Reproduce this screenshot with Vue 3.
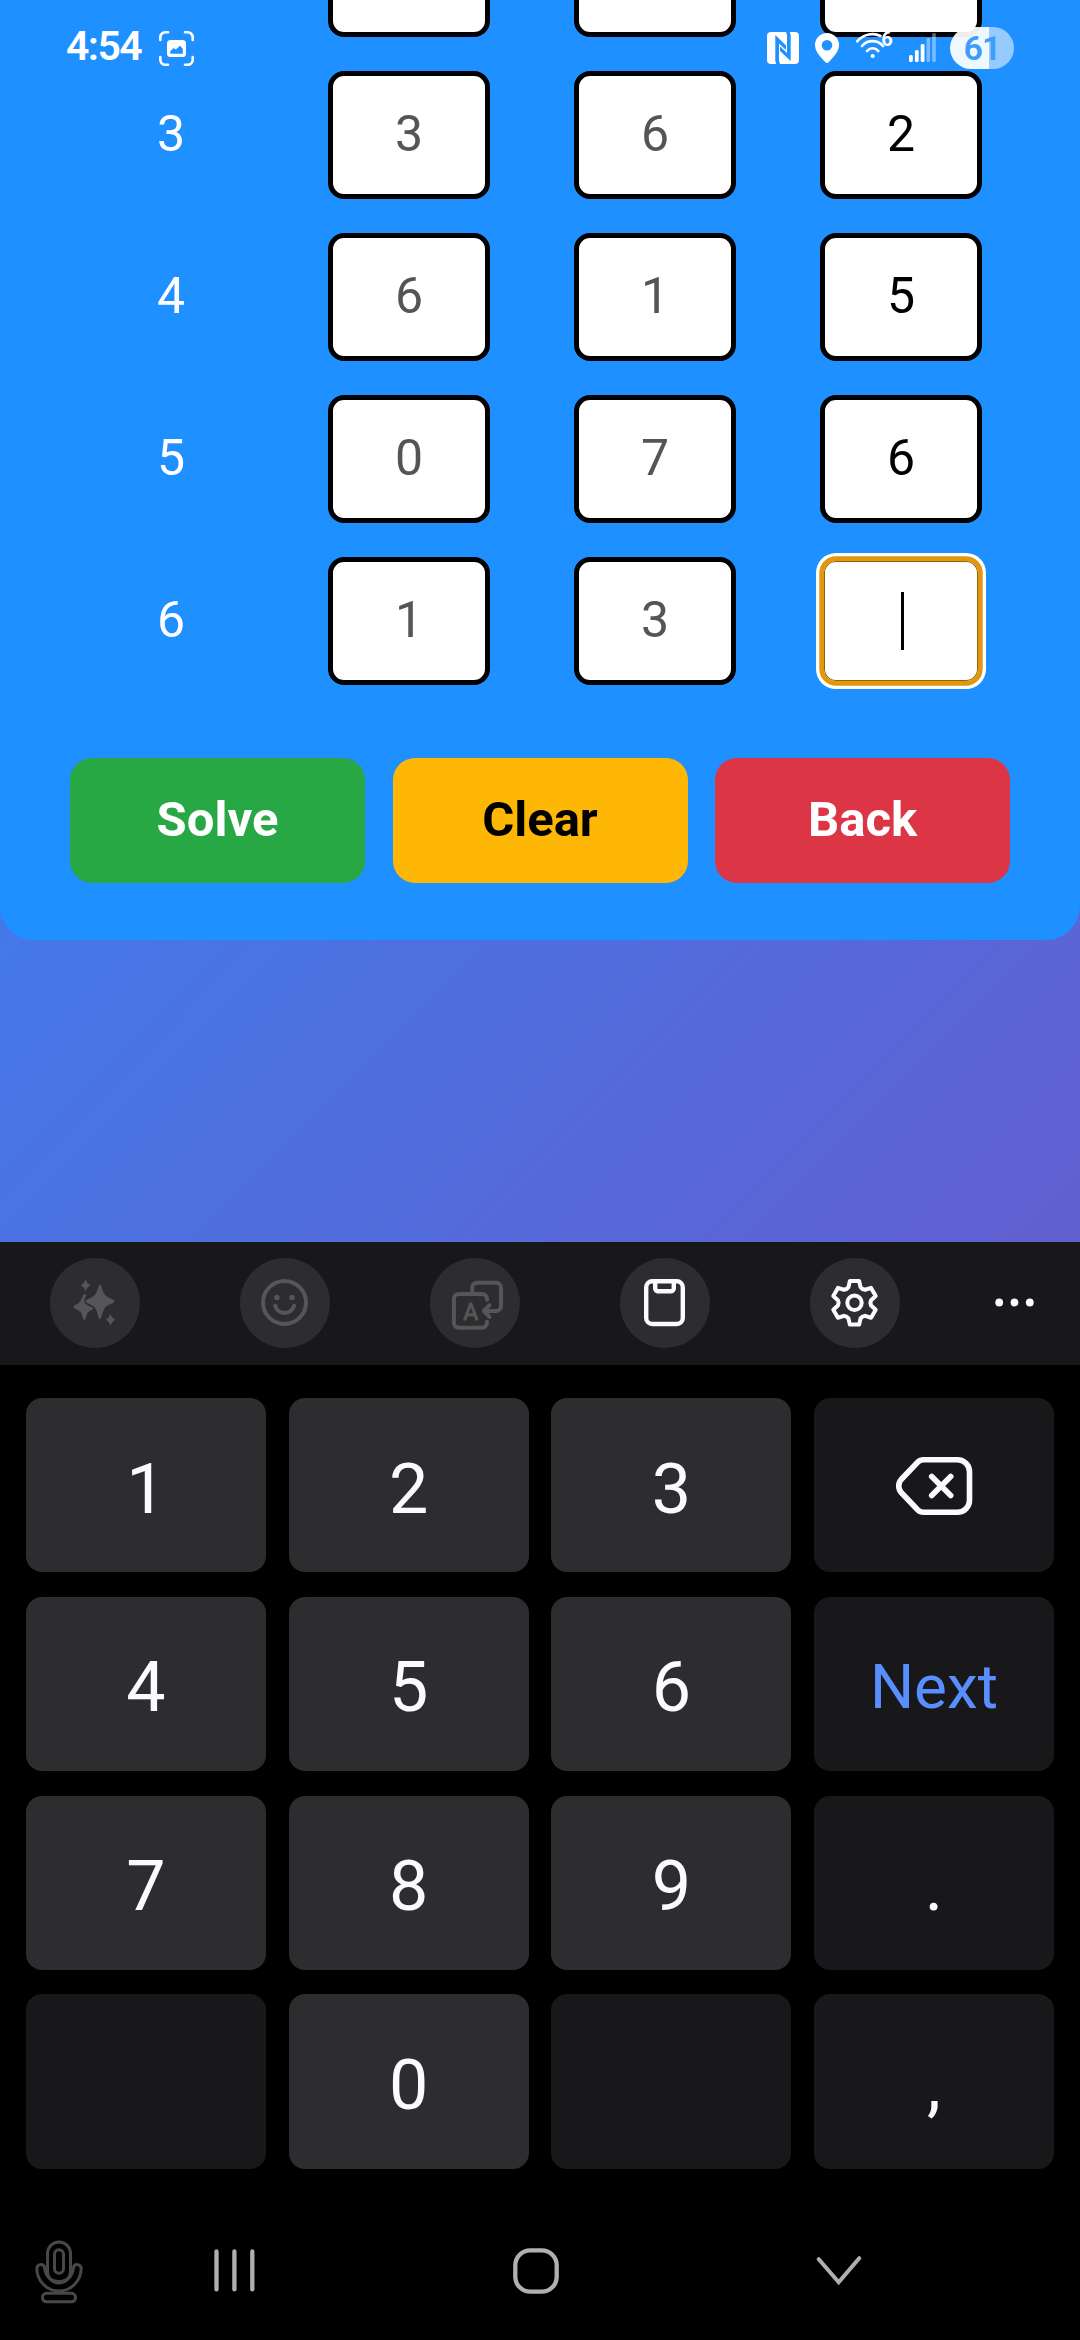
<script setup>
const rows = [
  { n: '3', a: '3', b: '6', c: '2' },
  { n: '4', a: '6', b: '1', c: '5' },
  { n: '5', a: '0', b: '7', c: '6' },
  { n: '6', a: '1', b: '3', c: null },
]

const keys = [
  { t: '1' }, { t: '2' }, { t: '3' }, { icon: 'backspace', dark: true },
  { t: '4' }, { t: '5' }, { t: '6' }, { t: 'Next', dark: true, action: true },
  { t: '7' }, { t: '8' }, { t: '9' }, { t: '.', dark: true },
  { t: '', dark: true }, { t: '0' }, { t: '', dark: true }, { t: ',', dark: true },
]

// Six-toothed gear outline, drawn around the centre of its button.
const profile = [[-12, 22.3], [12, 22.3], [21, 16.8], [30, 15.9], [39, 16.8]]
const gear = 'M' + Array.from({ length: 6 }, (_, k) => profile.map(([deg, r]) => {
  const a = ((k * 60 + deg) * Math.PI) / 180
  return `${(44.5 + r * Math.sin(a)).toFixed(2)} ${(44.8 - r * Math.cos(a)).toFixed(2)}`
}).join('L')).join('L') + 'Z'
</script>

<template>
  <div class="screen">
    <header class="status">
      <span class="time">4:54</span>
      <svg class="shot" width="35" height="35" viewBox="0 0 35 35" fill="none">
        <path d="M1.3 9V6.3a5 5 0 0 1 5-5H9M26 1.3h2.7a5 5 0 0 1 5 5V9M33.7 26v2.7a5 5 0 0 1-5 5H26M9 33.7H6.3a5 5 0 0 1-5-5V26" stroke="#fff" stroke-width="2.6" stroke-linecap="round" />
        <rect x="8" y="9" width="19" height="17" rx="3.5" fill="#fff" />
        <path d="M11.3 22.8v-2.6l3.3-3.2 2.2 1.6 4.2-3.8 2.8 3v5z" fill="#1e90ff" />
      </svg>
      <span class="spacer"></span>
      <svg class="nfc" width="32" height="32" viewBox="0 0 32 32">
        <rect width="32" height="32" rx="4" fill="#fff" />
        <path d="M9.3 32L8.3 29V3L19 13.5V18L12 11.5V29l1 3zM22.7 0l1 3v26L13 19v-4.500L20 21V3l-1-3z" fill="#1e90ff" />
      </svg>
      <svg class="pin" width="24" height="30" viewBox="0 0 24 30">
        <path fill-rule="evenodd" d="M12 0a12 12 0 0 0-12 12c0 7 6 12.500 10.500 17.300a2.100 2.100 0 0 0 3 0C18 24.500 24 19 24 12A12 12 0 0 0 12 0zm0 7a5.300 5.300 0 1 1 0 10.600A5.300 5.300 0 0 1 12 7z" fill="#fff" />
      </svg>
      <svg class="wifi" width="42" height="50" viewBox="0 -10 42 50" fill="none">
        <g stroke="#fff" stroke-width="2.600" stroke-linecap="round">
          <path d="M2.200 8.300C9 .5 19 -.3 25.500 3" />
          <path d="M7 13C12.500 6.500 22.500 6.500 28 13" />
          <path d="M12 18c3.500-3.600 8-3.600 11.300 0" />
        </g>
        <circle cx="17.700" cy="23" r="2.100" fill="#fff" />
        <text x="26.300" y="13.300" font-size="20" font-weight="700" fill="#fff">6</text>
      </svg>
      <svg class="signal" width="27" height="30" viewBox="0 0 27 30" fill="#fff">
        <rect x="0" y="22" width="3.800" height="7" rx="1.500" />
        <rect x="5.900" y="17" width="3.800" height="12" rx="1.500" />
        <rect x="11.700" y="11" width="3.800" height="18" rx="1.500" />
        <rect x="17.500" y="5" width="3.600" height="24" rx="1.500" opacity=".4" />
        <rect x="23.200" y="0" width="3.600" height="29" rx="1.500" opacity=".4" />
      </svg>
      <span class="battery">61</span>
    </header>

    <main class="page">
      <section class="card">
        <div class="row">
          <span class="label"></span>
          <span class="cell"></span><span class="cell"></span><span class="cell"></span>
        </div>
        <div v-for="r in rows" :key="r.n" class="row">
          <span class="label">{{ r.n }}</span>
          <span class="cell muted">{{ r.a }}</span>
          <span class="cell muted">{{ r.b }}</span>
          <span v-if="r.c" class="cell">{{ r.c }}</span>
          <span v-else class="cell focus"><i class="caret"></i></span>
        </div>
        <div class="actions">
          <button class="btn solve">Solve</button>
          <button class="btn clear">Clear</button>
          <button class="btn back">Back</button>
        </div>
      </section>
    </main>

    <section class="keyboard">
      <div class="tools">
        <span class="tool off">
          <svg width="90" height="90" viewBox="0 0 90 90" fill="#565658">
            <path d="M49.900 26.500Q50.800 26.500 51.200 28Q53.300 35.500 55.300 37.300Q57 39 63.500 42Q65.500 43.300 63.500 44.500Q57 47.500 55.300 49.300Q53.300 51.500 51.200 59.500Q49.900 63 48.600 59.500Q46.500 51.500 44.500 49.300Q42.800 47.500 36.300 44.500Q34.300 43.300 36.300 42Q42.800 39 44.500 37.300Q46.500 35.500 48.600 28Q49 26.500 49.900 26.500z" />
            <path d="M35 36Q36.500 36.500 36 38Q33.500 41.500 34.500 44.500Q36 47 41.500 49Q44 50.500 42.500 51.500Q38 53.500 37.300 55.500L35.600 60.800Q34.400 63.500 33.200 60.800L31.500 55.500Q30.500 53.300 24.500 50.300Q22 48.900 24.500 47.500Q29.500 45 30.600 43L33.300 37Q34 35.700 35 36z" />
            <path d="M35.600 21q1.400 4.700 5 6.200q-3.600 1.500-5 6.200q-1.400-4.700-5-6.200q3.600-1.500 5-6.200zM60.500 55.700q1.400 4.500 5 6q-3.600 1.500-5 6q-1.400-4.500-5-6q3.600-1.500 5-6z" />
          </svg>
        </span>
        <span class="tool off">
          <svg width="90" height="90" viewBox="0 0 90 90" fill="none" stroke="#565658" stroke-width="4" stroke-linecap="round">
            <circle cx="44.500" cy="44.500" r="21.500" />
            <path d="M35.200 47.800c2.500 9.500 16.300 9.500 18.800 0" />
            <g fill="#565658" stroke="none"><circle cx="36.900" cy="39.400" r="2.700" /><circle cx="52" cy="39.400" r="2.700" /></g>
          </svg>
        </span>
        <span class="tool off">
          <svg width="90" height="90" viewBox="0 0 90 90" fill="none" stroke="#565658" stroke-width="4" stroke-linecap="round" stroke-linejoin="round">
            <path d="M57 41.800v-.8a5 5 0 0 0-5-5H28.900a5 5 0 0 0-5 5v23.700a5 5 0 0 0 5 5H52a5 5 0 0 0 5-5v-.9" />
            <path d="M42.200 35v-5.200a5 5 0 0 1 5-5H66a5 5 0 0 1 5 5V48a5 5 0 0 1-5 5H54.500M59.500 47.200L54 53l5.500 5.800" />
            <text x="40.700" y="61.600" text-anchor="middle" font-size="23" fill="#565658" stroke-width=".8">A</text>
          </svg>
        </span>
        <span class="tool">
          <svg width="90" height="90" viewBox="0 0 90 90" fill="none" stroke="#fcfaff" stroke-width="4.400">
            <rect x="26.200" y="23.200" width="36.600" height="42.800" rx="6" />
            <path d="M35.200 23.500v6.700a3 3 0 0 0 3 3h12.600a3 3 0 0 0 3-3v-6.700" />
          </svg>
        </span>
        <span class="tool">
          <svg width="90" height="90" viewBox="0 0 90 90" fill="none" stroke="#fcfaff" stroke-width="4" stroke-linejoin="round">
            <path :d="gear" />
            <circle cx="44.500" cy="44.800" r="7.200" />
          </svg>
        </span>
        <span class="more">
          <svg width="40" height="10" viewBox="0 0 40 10" fill="#fcfaff">
            <circle cx="4.200" cy="4.500" r="3.900" /><circle cx="19.500" cy="4.500" r="3.900" /><circle cx="34.800" cy="4.500" r="3.900" />
          </svg>
        </span>
      </div>

      <div class="pad">
        <span v-for="(k, i) in keys" :key="i" class="key" :class="{ dark: k.dark, action: k.action }">
          <svg v-if="k.icon" width="78" height="60" viewBox="0 0 78 60" fill="none" stroke="#fcfaff" stroke-width="5.600" stroke-linecap="round">
            <path d="M28.500 3.800H62.500a12 12 0 0 1 12 12V44.200a12 12 0 0 1-12 12H28.500c-2.300 0-4.300-.8-5.900-2.400L6.200 36.500c-3.300-3.700-3.300-9.300 0-13L22.600 6.200c1.600-1.600 3.600-2.400 5.900-2.400z" />
            <path d="M36.700 20.500l19 19M55.700 20.500l-19 19" />
          </svg>
          <template v-else>{{ k.t }}</template>
        </span>
      </div>

      <nav class="nav">
        <svg class="mic" width="48" height="64" viewBox="0 0 48 64" fill="none" stroke="#484848" stroke-width="3">
          <rect x="12.500" y="2" width="23" height="41" rx="11.500" />
          <rect x="19.500" y="9.800" width="9" height="23.500" rx="4.500" />
          <path d="M9.500 27.500c-1-4.500-7.500-3.500-7.700 1C2 41 12 51 24 51s22-10 22.200-22.500c-.2-4.500-6.700-5.500-7.700-1C37.500 37 31.500 41.500 24 41.500S10.500 37 9.500 27.500z" />
          <rect x="7.500" y="53.300" width="33" height="8.500" rx="4.200" />
        </svg>
        <svg width="41" height="43" viewBox="0 0 41 43" stroke="#b0b0b0" stroke-width="4.300" stroke-linecap="round">
          <path d="M2.500 2.400v38M20.400 2.400v38M38.300 2.400v38" />
        </svg>
        <svg width="46" height="46" viewBox="0 0 46 46" fill="none" stroke="#b0b0b0" stroke-width="4.300">
          <rect x="2.300" y="2.300" width="41.400" height="41.400" rx="15" />
        </svg>
        <svg width="46" height="30" viewBox="0 0 46 30" fill="none" stroke="#b0b0b0" stroke-width="4" stroke-linecap="round">
          <path d="M2.800 3.200L22.700 26.200L43.200 2.200" />
        </svg>
      </nav>
    </section>
  </div>
</template>

<style>
body { background: #000; }
</style>

<style scoped>
.screen {
  position: relative;
  display: flex;
  flex-direction: column;
  width: 1080px;
  height: 2340px;
  overflow: hidden;
  font-family: Roboto, "Liberation Sans", sans-serif;
}
.status {
  position: absolute;
  inset: 0 0 auto;
  z-index: 1;
  display: flex;
  align-items: center;
  height: 96px;
  padding: 0 66px;
  color: #fff;
}
.time { font-size: 41px; font-weight: 600; letter-spacing: -1.6px; line-height: 1; margin-top: -3px; width: 77px; }
.shot { margin-left: 16px; }
.spacer { flex: 1; }
.nfc { margin-right: 16px; }
.pin { margin-right: 16px; }
.wifi { margin-right: 12px; }
.signal { margin-right: 14px; margin-top: -1px; }
.battery {
  width: 64px;
  height: 42px;
  line-height: 43px;
  margin-top: -1px;
  border-radius: 21px;
  background: linear-gradient(90deg, rgba(255, 255, 255, .93) 39px, rgba(255, 255, 255, .53) 39px);
  color: #3d9df8;
  font-size: 34px;
  font-weight: 600;
  letter-spacing: -1px;
  text-align: center;
}
.page {
  height: 1242px;
  background: linear-gradient(135deg, #3089f8 0%, #625fd0 100%);
}
.card {
  display: flex;
  flex-direction: column;
  gap: 34px;
  box-sizing: border-box;
  height: 940px;
  padding: 0 56px;
  overflow: hidden;
  border-radius: 0 0 34px 34px;
  background: #1e90ff;
}
.row {
  display: grid;
  grid-template-columns: 230px repeat(3, 246px);
  place-items: center;
  height: 128px;
  flex: none;
}
.row:first-child { margin-top: -91px; }
.label { color: #fff; font-size: 50px; padding-bottom: 3px; }
.cell {
  display: flex;
  align-items: center;
  justify-content: center;
  box-sizing: border-box;
  width: 162px;
  height: 128px;
  padding-bottom: 3px;
  border: 5px solid #000;
  border-radius: 16px;
  background: #fff;
  color: #000;
  font-size: 50px;
}
.muted { color: #555; }
.focus {
  padding-bottom: 0;
  border: 4px solid #e1980c;
  box-shadow: inset 0 0 0 1px #8f650f, 0 0 0 .7px #e1980c, 0 0 0 4px #fff;
}
.caret { width: 3px; height: 58px; background: #000; margin-left: 2px; }
.actions {
  display: grid;
  grid-template-columns: repeat(3, 1fr);
  gap: 27.500px;
  margin: 39px 14px 0;
}
.btn {
  height: 125px;
  padding: 0 0 2px;
  border: 0;
  border-radius: 22px;
  color: #fff;
  font: 700 49px Roboto, "Liberation Sans", sans-serif;
}
.solve { background: #28a745; }
.clear { background: #ffb706; color: #000; }
.back { background: #dc3545; }

.keyboard { flex: 1; display: flex; flex-direction: column; background: #000; }
.tools {
  display: grid;
  grid-template-columns: repeat(5, 190px) 1fr;
  place-items: center;
  box-sizing: border-box;
  height: 123px;
  padding-bottom: 1px;
  background: #18181a;
}
.tool { width: 90px; height: 90px; border-radius: 50%; background: #2d2d2f; }
.tool svg { display: block; }
.more svg { display: block; }
.pad {
  display: grid;
  grid-template-columns: repeat(4, 240px);
  grid-auto-rows: 174.300px;
  justify-content: space-between;
  row-gap: 24.500px;
  padding: 33px 26px 0;
}
.key {
  display: flex;
  align-items: center;
  justify-content: center;
  box-sizing: border-box;
  padding-top: 7px;
  border-radius: 16px;
  background: #2d2d2f;
  color: #fcfaff;
  font-size: 70px;
  line-height: 1;
}
.key svg { margin-top: -6px; }
.dark { background: #18181a; }
.action { color: #598eff; font-size: 62px; }
.nav {
  display: grid;
  grid-template-columns: 118px 232px 372px 234px;
  place-items: center;
  height: 67px;
  margin-top: 68.800px;
}
.mic { margin-top: 3px; }
</style>
